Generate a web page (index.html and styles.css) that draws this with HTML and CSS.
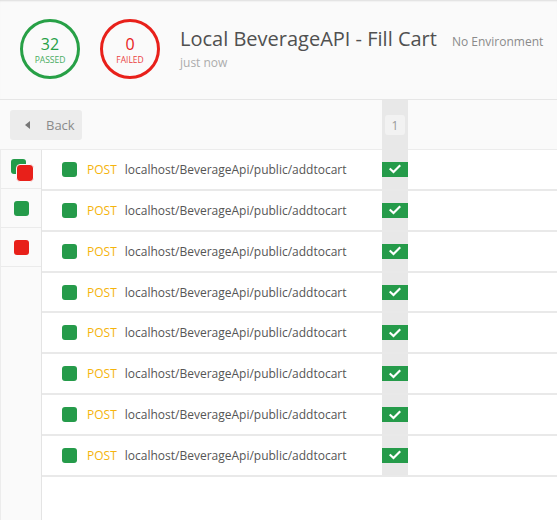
FILE: index.html
```html
<!DOCTYPE html>
<html>
<head>
<meta charset="utf-8">
<link rel="stylesheet" href="styles.css">
</head>
<body>
<header class="header">
  <div class="stat stat-pass"><span class="stat-num">32</span><span class="stat-label">PASSED</span></div>
  <div class="stat stat-fail"><span class="stat-num">0</span><span class="stat-label">FAILED</span></div>
  <div class="title-block">
    <div class="title-line"><span class="title">Local BeverageAPI - Fill Cart</span><span class="env">No Environment</span></div>
    <div class="when">just now</div>
  </div>
</header>
<div class="toolbar">
  <div class="toolbar-left"><button class="back"><span class="tri"></span>Back</button></div>
  <div class="col-cell"><span class="badge">1</span></div>
  <div></div>
</div>
<div class="content">
  <aside class="sidebar">
    <div class="side-item"><span class="sq green s1"></span><span class="sq red s2"></span></div>
    <div class="side-item"><span class="sq green"></span></div>
    <div class="side-item"><span class="sq red"></span></div>
  </aside>
  <main class="list">
    <div class="row"><div class="req"><span class="sq green"></span><span class="method">POST</span><span class="url">localhost/BeverageApi/public/addtocart</span></div><div class="col-cell"><span class="check"><svg viewBox="0 0 12 10" width="12" height="10"><path d="M1.5 5.2 L4.5 8 L10.5 2" fill="none" stroke="#fff" stroke-width="2.2" stroke-linecap="square"/></svg></span></div><div></div></div>
    <div class="row"><div class="req"><span class="sq green"></span><span class="method">POST</span><span class="url">localhost/BeverageApi/public/addtocart</span></div><div class="col-cell"><span class="check"><svg viewBox="0 0 12 10" width="12" height="10"><path d="M1.5 5.2 L4.5 8 L10.5 2" fill="none" stroke="#fff" stroke-width="2.2" stroke-linecap="square"/></svg></span></div><div></div></div>
    <div class="row"><div class="req"><span class="sq green"></span><span class="method">POST</span><span class="url">localhost/BeverageApi/public/addtocart</span></div><div class="col-cell"><span class="check"><svg viewBox="0 0 12 10" width="12" height="10"><path d="M1.5 5.2 L4.5 8 L10.5 2" fill="none" stroke="#fff" stroke-width="2.2" stroke-linecap="square"/></svg></span></div><div></div></div>
    <div class="row"><div class="req"><span class="sq green"></span><span class="method">POST</span><span class="url">localhost/BeverageApi/public/addtocart</span></div><div class="col-cell"><span class="check"><svg viewBox="0 0 12 10" width="12" height="10"><path d="M1.5 5.2 L4.5 8 L10.5 2" fill="none" stroke="#fff" stroke-width="2.2" stroke-linecap="square"/></svg></span></div><div></div></div>
    <div class="row"><div class="req"><span class="sq green"></span><span class="method">POST</span><span class="url">localhost/BeverageApi/public/addtocart</span></div><div class="col-cell"><span class="check"><svg viewBox="0 0 12 10" width="12" height="10"><path d="M1.5 5.2 L4.5 8 L10.5 2" fill="none" stroke="#fff" stroke-width="2.2" stroke-linecap="square"/></svg></span></div><div></div></div>
    <div class="row"><div class="req"><span class="sq green"></span><span class="method">POST</span><span class="url">localhost/BeverageApi/public/addtocart</span></div><div class="col-cell"><span class="check"><svg viewBox="0 0 12 10" width="12" height="10"><path d="M1.5 5.2 L4.5 8 L10.5 2" fill="none" stroke="#fff" stroke-width="2.2" stroke-linecap="square"/></svg></span></div><div></div></div>
    <div class="row"><div class="req"><span class="sq green"></span><span class="method">POST</span><span class="url">localhost/BeverageApi/public/addtocart</span></div><div class="col-cell"><span class="check"><svg viewBox="0 0 12 10" width="12" height="10"><path d="M1.5 5.2 L4.5 8 L10.5 2" fill="none" stroke="#fff" stroke-width="2.2" stroke-linecap="square"/></svg></span></div><div></div></div>
    <div class="row"><div class="req"><span class="sq green"></span><span class="method">POST</span><span class="url">localhost/BeverageApi/public/addtocart</span></div><div class="col-cell"><span class="check"><svg viewBox="0 0 12 10" width="12" height="10"><path d="M1.5 5.2 L4.5 8 L10.5 2" fill="none" stroke="#fff" stroke-width="2.2" stroke-linecap="square"/></svg></span></div><div></div></div>
  </main>
</div>
</body>
</html>
```
FILE: styles.css
```css
* { box-sizing: border-box; }
html, body { margin: 0; padding: 0; }
body {
  width: 557px;
  height: 520px;
  overflow: hidden;
  font-family: "Open Sans", "Liberation Sans", sans-serif;
  background: #fff;
  display: flex;
  flex-direction: column;
}
.header {
  height: 100px;
  flex: none;
  background: #fafafa;
  border-bottom: 1px solid #e6e6e6;
  box-shadow: inset 0 2px 2px -1px rgba(0,0,0,0.12);
  display: flex;
  align-items: center;
  padding: 0 0 1px 20px;
  gap: 20px;
}
.stat {
  width: 60px;
  height: 60px;
  border-radius: 50%;
  border: 3px solid;
  display: flex;
  flex-direction: column;
  align-items: center;
  justify-content: center;
  padding-top: 1px;
}
.stat-pass { border-color: #27a046; color: #27a046; }
.stat-fail { border-color: #e8201a; color: #e8201a; }
.stat-num { font-size: 16px; line-height: 20px; }
.stat-label { font-size: 8.5px; line-height: 10px; margin-top: 1px; opacity: 0.85; }
.title-block { margin-top: -2px; }
.title-line { display: flex; align-items: baseline; gap: 15px; }
.title { font-size: 20px; color: #505050; line-height: 26px; }
.env { font-size: 12px; color: #8a8a8a; }
.when { font-size: 12px; color: #acacac; line-height: 16px; margin-top: 3px; }

.toolbar {
  height: 50px;
  flex: none;
  background: #fafafa;
  border-bottom: 1px solid #ececec;
  display: grid;
  grid-template-columns: 382px 26px 1fr;
}
.toolbar-left { padding: 10px; }
.back {
  width: 72px;
  height: 30px;
  border: none;
  border-radius: 3px;
  background: #ececec;
  color: #8a8a8a;
  font-family: inherit;
  font-size: 13px;
  display: flex;
  align-items: center;
  padding: 0 0 0 15px;
  gap: 16px;
}
.tri {
  width: 0; height: 0;
  border-top: 4px solid transparent;
  border-bottom: 4px solid transparent;
  border-right: 5px solid #777;
}
.col-cell {
  background: #e8e8e8;
  display: flex;
  align-items: center;
  justify-content: center;
}
.badge {
  width: 20px;
  height: 20px;
  border-radius: 3px;
  background: #f2f2f2;
  color: #999;
  font-size: 12px;
  display: flex;
  align-items: center;
  justify-content: center;
}
.content { flex: 1; display: flex; min-height: 0; }
.sidebar {
  width: 42px;
  flex: none;
  background: #fafafa;
  border-left: 1px solid #ececec;
  border-right: 1px solid #e4e4e4;
}
.side-item {
  height: 39px;
  border-bottom: 1px solid #ebebeb;
  display: flex;
  align-items: center;
  justify-content: center;
  position: relative;
}
.sq {
  width: 15px;
  height: 15px;
  border-radius: 3px;
  flex: none;
  display: block;
}
.green { background: #259b4a; }
.red { background: #e8201a; }
.side-item .s1 { position: absolute; left: 10px; top: 9px; }
.side-item .s2 { position: absolute; left: 15px; top: 14px; width: 18px; height: 18px; border: 1.5px solid #fafafa; border-radius: 4px; }
.list { flex: 1; }
.row {
  height: 40.86px;
  border-bottom: 2px solid rgba(0,0,0,0.085);
  display: grid;
  grid-template-columns: 340px 26px 1fr;
}
.req {
  display: flex;
  align-items: center;
  padding-left: 20px;
  font-size: 12px;
}
.method { color: #f5b40c; margin-left: 10px; margin-right: 8px; }
.url { color: #555; }
.check {
  width: 26px;
  height: 15px;
  background: #259b4a;
  display: flex;
  align-items: center;
  justify-content: center;
}
```
